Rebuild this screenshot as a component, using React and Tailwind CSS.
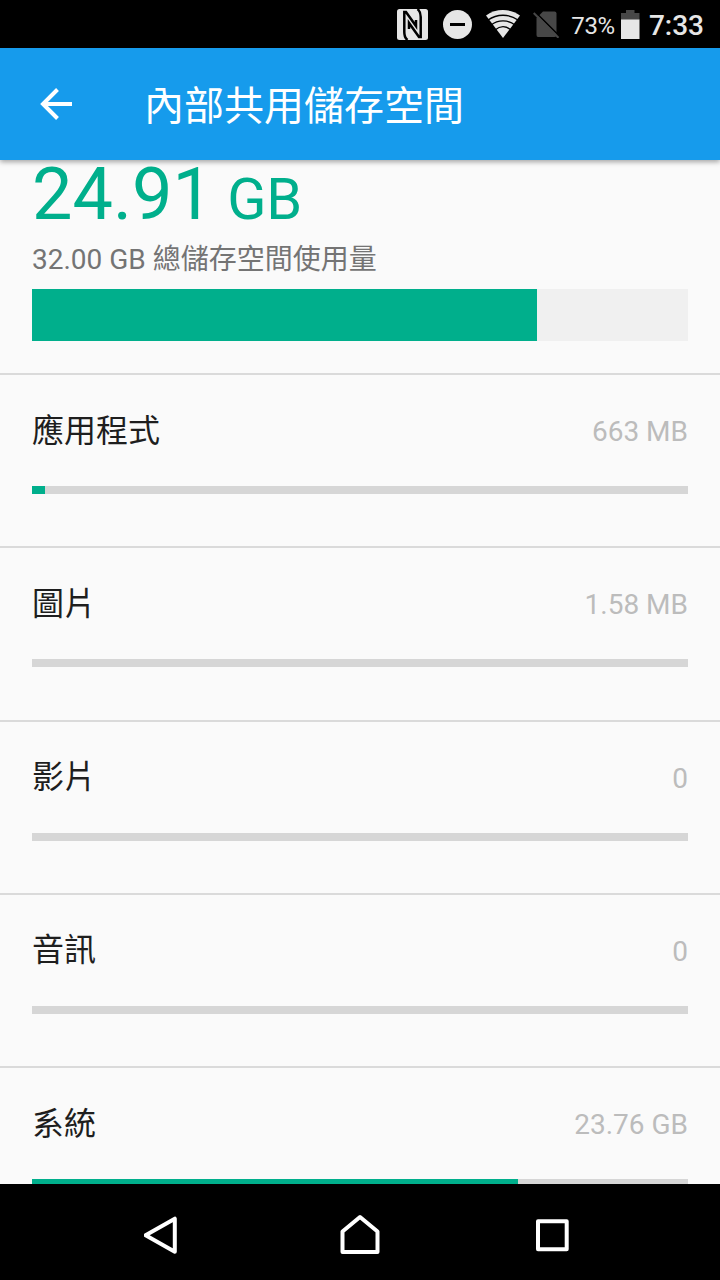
const TOTAL_USED = 77;

const CATEGORIES = [
    { name: "應用程式", size: "663 MB", percent: 2.05 },
    { name: "圖片", size: "1.58 MB", percent: 0 },
    { name: "影片", size: "0", percent: 0 },
    { name: "音訊", size: "0", percent: 0 },
    { name: "系統", size: "23.76 GB", percent: 74.1 },
];

function StatusBar() {
    return (
        <div className="h-12 shrink-0 bg-black flex items-center justify-end pr-4 text-[#e6e6e6]">
            {/* NFC */}
            <svg className="w-[31px] h-[31px]" viewBox="0 0 31 31">
                <rect width="31" height="31" rx="2.5" fill="#e6e6e6" />
                <path d="M10.500 31 C8 29 7.300 27 7.300 23 V3 H9 L19 17 V11" fill="none" stroke="#000" strokeWidth="2.5" />
                <path d="M20.500 0 C23 2 23.700 4 23.700 8 V28 H22 L12 14 V20" fill="none" stroke="#000" strokeWidth="2.5" />
            </svg>
            {/* Do not disturb */}
            <svg className="w-[29px] h-[29px] ml-[15px]" viewBox="0 0 29 29">
                <circle cx="14.5" cy="14.5" r="14.5" fill="#e6e6e6" />
                <rect x="7" y="13" width="15" height="3" fill="#000" />
            </svg>
            {/* Wi-Fi */}
            <svg className="w-[34px] h-7 ml-[14px]" viewBox="0 0 34 28">
                <path d="M0 5.5 C10 -1.8 24 -1.8 34 5.5 L17 28 Z" fill="#e6e6e6" />
                <path d="M2 10 C11 3.6 23 3.6 32 10 M5 15 C12 9.500 22 9.500 29 15 M9 20 C14 15.800 20 15.800 25 20" fill="none" stroke="#000" strokeWidth="1.4" />
            </svg>
            {/* No SIM */}
            <svg className="w-[27px] h-[27px] ml-[13px]" viewBox="0 0 27 27">
                <path d="M10 0.500 H21.500 Q23.500 0.500 23.500 2.500 V24 Q23.500 26 21.500 26 H5 Q3.500 26 3.500 24 V7 Z" fill="#474747" />
                <path d="M2.300 1 L27 25.700" stroke="#000" strokeWidth="1.6" />
                <path d="M0.700 2 L25.500 26.800" stroke="#474747" strokeWidth="2" />
            </svg>
            <span className="pt-[3px] ml-[11px] text-2xl leading-none tracking-[-0.3px]">73%</span>
            <svg className="w-[19px] h-[29px] ml-[6px]" viewBox="0 0 19 29">
                <path d="M0 3 H5 V0 H13.500 V3 H18.500 V10 H0 Z" fill="#474747" />
                <rect y="9.500" width="18.500" height="19.500" fill="#e6e6e6" />
            </svg>
            <span className="pt-[3px] ml-[9px] text-[28px] leading-none font-medium">7:33</span>
        </div>
    );
}

function AppBar({ title }) {
    return (
        <header className="relative z-10 h-28 shrink-0 bg-[#169bec] text-white flex items-center pl-10 shadow-[0_2px_5px_rgba(0,0,0,0.35)]">
            <svg className="w-8 h-8" viewBox="0 0 32 32">
                <path d="M17.500 1.500 L3 16 L17.500 30.500 M3 16 H32" fill="none" stroke="currentColor" strokeWidth="4" />
            </svg>
            <h1 className="ml-[72px] pt-[5px] text-[40px] leading-[56px]">{title}</h1>
        </header>
    );
}

function Summary() {
    return (
        <section className="h-[213px] shrink-0 px-8">
            <p className="h-[76px] text-[72px] leading-[70px] text-[#00af8c] whitespace-nowrap">
                24.91<span className="text-[57.6px]"> GB</span>
            </p>
            <p className="h-[53px] pt-px text-[28px] leading-[46px] text-[#747474]">32.00 GB 總儲存空間使用量</p>
            <div className="h-[52px] bg-[#f0f0f0]">
                <div className="h-full bg-[#00af8c]" style={{ width: `${TOTAL_USED}%` }} />
            </div>
        </section>
    );
}

function CategoryRow({ name, size, percent }) {
    return (
        <li className="h-[173.33px] shrink-0 border-t-2 border-[#dadada] px-8 pt-8">
            <div className="h-[46px] flex items-center justify-between">
                <span className="pt-px text-[32px] text-[#1e1e1e]">{name}</span>
                <span className="pt-1 text-[28px] text-[#bcbcbc]">{size}</span>
            </div>
            <div className="mt-[33px] h-2 bg-[#d6d6d6]">
                <div className="h-full bg-[#00af8c]" style={{ width: `${percent}%` }} />
            </div>
        </li>
    );
}

function NavBar() {
    return (
        <nav className="relative z-10 h-24 shrink-0 bg-black px-[72px] flex items-center">
            <button className="flex-1 flex justify-center">
                <svg className="w-12 h-12" viewBox="0 0 48 48" fill="none" stroke="#fff" strokeWidth="4" strokeLinejoin="round">
                    <path d="M30.800 10.700 V43.700 L1.600 27.200 Z" />
                </svg>
            </button>
            <button className="flex-1 flex justify-center">
                <svg className="w-12 h-12" viewBox="0 0 48 48" fill="none" stroke="#fff" strokeWidth="4" strokeLinejoin="round">
                    <path d="M6.500 44 V23.500 L24 9 L41.500 23.500 V44 Z" />
                </svg>
            </button>
            <button className="flex-1 flex justify-center">
                <svg className="w-12 h-12" viewBox="0 0 48 48" fill="none" stroke="#fff" strokeWidth="4" strokeLinejoin="round">
                    <rect x="10" y="13.300" width="28.700" height="28" />
                </svg>
            </button>
        </nav>
    );
}

export default function App() {
    return (
        <div className="w-[720px] h-[1280px] overflow-hidden flex flex-col bg-[#fafafa] font-[Roboto,'Noto_Sans_CJK_TC',sans-serif]">
            <StatusBar />
            <AppBar title="內部共用儲存空間" />
            <main className="flex-1 min-h-0 flex flex-col">
                <Summary />
                <ul className="flex flex-col">
                    {CATEGORIES.map(c => (
                        <CategoryRow key={c.name} {...c} />
                    ))}
                </ul>
            </main>
            <NavBar />
        </div>
    );
}
